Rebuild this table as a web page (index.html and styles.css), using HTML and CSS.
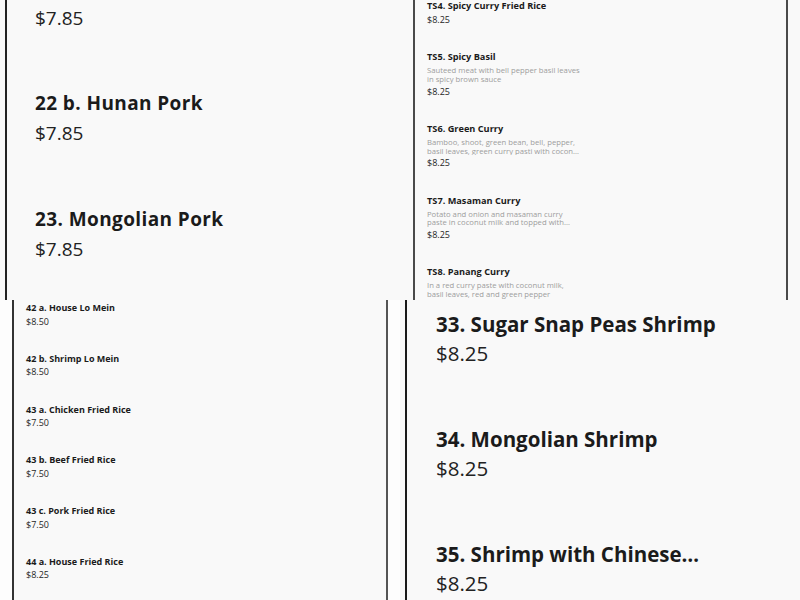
FILE: index.html
```html
<!DOCTYPE html>
<html lang="en">
<head>
<meta charset="utf-8">
<title>Menu</title>
<link rel="stylesheet" href="styles.css">
</head>
<body>
<main class="board">
  <section class="tile">
    <div class="menu menu-a">
      <p class="price-l">$7.85</p>
      <article class="item">
        <h3 class="name-l">22 b. Hunan Pork</h3>
        <p class="price-l">$7.85</p>
      </article>
      <article class="item">
        <h3 class="name-l">23. Mongolian Pork</h3>
        <p class="price-l">$7.85</p>
      </article>
    </div>
  </section>

  <section class="tile">
    <div class="menu menu-b">
      <article class="item">
        <h3 class="name-s">TS4. Spicy Curry Fried Rice</h3>
        <p class="price-s">$8.25</p>
      </article>
      <article class="item">
        <h3 class="name-s">TS5. Spicy Basil</h3>
        <p class="desc">Sauteed meat with bell pepper basil leaves in spicy brown sauce</p>
        <p class="price-s">$8.25</p>
      </article>
      <article class="item">
        <h3 class="name-s">TS6. Green Curry</h3>
        <p class="desc">Bamboo, shoot, green bean, bell, pepper, basil leaves, green curry pasti with coconut milk</p>
        <p class="price-s">$8.25</p>
      </article>
      <article class="item">
        <h3 class="name-s">TS7. Masaman Curry</h3>
        <p class="desc">Potato and onion and masaman curry paste in coconut milk and topped with peanuts</p>
        <p class="price-s">$8.25</p>
      </article>
      <article class="item">
        <h3 class="name-s">TS8. Panang Curry</h3>
        <p class="desc">In a red curry paste with coconut milk, basil leaves, red and green pepper</p>
        <p class="price-s">$8.25</p>
      </article>
    </div>
  </section>

  <section class="tile tile-light">
    <div class="menu menu-c">
      <article class="item">
        <h3 class="name-s">42 a. House Lo Mein</h3>
        <p class="price-s">$8.50</p>
      </article>
      <article class="item">
        <h3 class="name-s">42 b. Shrimp Lo Mein</h3>
        <p class="price-s">$8.50</p>
      </article>
      <article class="item">
        <h3 class="name-s">43 a. Chicken Fried Rice</h3>
        <p class="price-s">$7.50</p>
      </article>
      <article class="item">
        <h3 class="name-s">43 b. Beef Fried Rice</h3>
        <p class="price-s">$7.50</p>
      </article>
      <article class="item">
        <h3 class="name-s">43 c. Pork Fried Rice</h3>
        <p class="price-s">$7.50</p>
      </article>
      <article class="item">
        <h3 class="name-s">44 a. House Fried Rice</h3>
        <p class="price-s">$8.25</p>
      </article>
    </div>
  </section>

  <section class="tile">
    <div class="menu menu-d">
      <article class="item">
        <h3 class="name-xl">33. Sugar Snap Peas Shrimp</h3>
        <p class="price-xl">$8.25</p>
      </article>
      <article class="item">
        <h3 class="name-xl">34. Mongolian Shrimp</h3>
        <p class="price-xl">$8.25</p>
      </article>
      <article class="item">
        <h3 class="name-xl clamp-1">35. Shrimp with Chinese Vegetables</h3>
        <p class="price-xl">$8.25</p>
      </article>
    </div>
  </section>
</main>
</body>
</html>
```

FILE: styles.css
```css
* {
  box-sizing: border-box;
  margin: 0;
  padding: 0;
}

body {
  background: #ffffff;
  font-family: "Open Sans", "Liberation Sans", sans-serif;
  color: #1d1d1d;
}

.board {
  display: grid;
  grid-template-columns: 400px 400px;
  grid-template-rows: 300px 300px;
  width: 800px;
  height: 600px;
}

.tile {
  overflow: hidden;
  background: #f9f9f9;
}

.tile-light {
  background: #fdfdfd;
}

.menu {
  height: 100%;
  background: #f9f9f9;
  display: flex;
  flex-direction: column;
}

.item {
  display: flex;
  flex-direction: column;
}

/* top-left: large scale */
.menu-a {
  margin-left: 5px;
  border-left: 2px solid #222222;
  padding: 5.6px 0 0 28px;
  gap: 61.5px;
}

.name-l {
  font-size: 19px;
  line-height: 24px;
  font-weight: 700;
  letter-spacing: 0.4px;
  color: #1b1b1b;
}

.price-l {
  font-size: 19px;
  line-height: 24px;
  font-weight: 400;
  color: #222222;
}

.item .price-l {
  margin-top: 6px;
}

/* bottom-right: extra large scale */
.menu-d {
  margin-left: 5px;
  border-left: 2px solid #1a1a1a;
  padding: 10.75px 0 0 29px;
  gap: 59.7px;
}

.name-xl {
  font-size: 20.5px;
  line-height: 26px;
  font-weight: 700;
  color: #1b1b1b;
  max-width: 330px;
}

.price-xl {
  font-size: 20.5px;
  line-height: 26px;
  font-weight: 400;
  color: #222222;
  margin-top: 3.3px;
}

.clamp-1 {
  display: -webkit-box;
  -webkit-box-orient: vertical;
  -webkit-line-clamp: 1;
  overflow: hidden;
}

/* small scale panels */
.menu-b {
  margin-left: 13px;
  width: 375px;
  border-left: 2px solid #4a4a4a;
  border-right: 2px solid #4a4a4a;
  padding: 0.3px 0 0 12px;
  gap: 25.5px;
}

.menu-c {
  margin-left: 12px;
  width: 376px;
  border-left: 2px solid #333333;
  border-right: 2px solid #555555;
  padding: 2.3px 0 0 12px;
  gap: 25.2px;
}

.name-s {
  font-size: 9.2px;
  line-height: 12px;
  font-weight: 700;
  color: #1b1b1b;
}

.menu-c .name-s {
  font-size: 9px;
}

.price-s {
  font-size: 9px;
  line-height: 12px;
  font-weight: 500;
  color: #262626;
  margin-top: 1.5px;
}

.desc {
  font-size: 7.7px;
  line-height: 8.7px;
  color: #9d9d9d;
  margin-top: 2.8px;
  max-width: 155px;
  display: -webkit-box;
  -webkit-box-orient: vertical;
  -webkit-line-clamp: 2;
  overflow: hidden;
}

.desc + .price-s {
  margin-top: 2px;
}
```
